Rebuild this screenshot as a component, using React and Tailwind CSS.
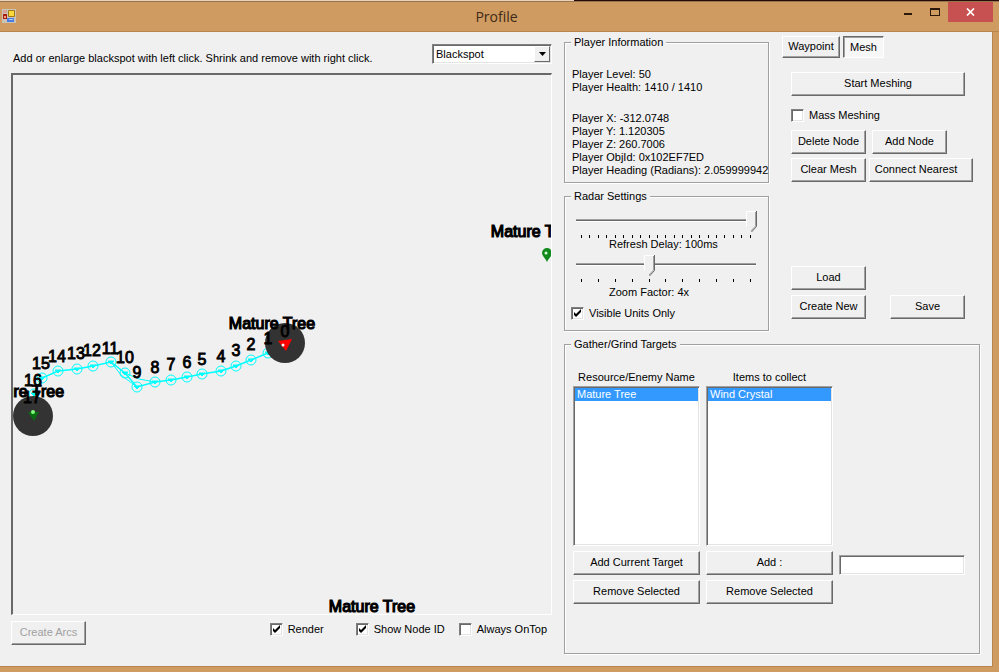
import { useState } from 'react';

const nodes = [
  { id: 1, x: 255, y: 278, labelY: 269 },
  { id: 2, x: 238, y: 285, labelY: 275 },
  { id: 3, x: 223, y: 291, labelY: 281 },
  { id: 4, x: 208, y: 296, labelY: 287 },
  { id: 5, x: 189, y: 299, labelY: 290 },
  { id: 6, x: 174, y: 302, labelY: 293 },
  { id: 7, x: 158, y: 305, labelY: 295 },
  { id: 8, x: 142, y: 307, labelY: 298 },
  { id: 9, x: 124, y: 312, labelY: 303 },
  { id: 10, x: 112, y: 298, labelY: 288 },
  { id: 11, x: 98, y: 287, labelY: 279 },
  { id: 12, x: 80, y: 291, labelY: 281 },
  { id: 13, x: 64, y: 294, labelY: 284 },
  { id: 14, x: 45, y: 296, labelY: 287 },
  { id: 15, x: 29, y: 303, labelY: 294 },
  { id: 16, x: 21, y: 319, labelY: 311 },
  { id: 17, x: 20, y: 338, labelY: 328 },
];

const targets = [
  { x: 259, y: 254 },
  { x: 8, y: 322 },
  { x: 521, y: 162 },
  { x: 359, y: 537 },
];

function Button({ className = '', children, ...props }) {
  return (
    <button
      type="button"
      className={`h-6 border border-t-white border-l-white border-r-[#696969] border-b-[#696969] bg-[#f0f0f0] pb-px text-center whitespace-nowrap shadow-[inset_-1px_-1px_0_#a0a0a0] disabled:text-[#a0a0a0] ${className}`}
      {...props}
    >
      {children}
    </button>
  );
}

function Group({ title, className = '', children }) {
  return (
    <fieldset className={`min-w-0 border border-[#a0a0a0] shadow-[1px_1px_0_#fff,inset_1px_1px_0_#fff] ${className}`}>
      <legend className="ml-[6px] bg-[#f0f0f0] px-[3px]">{title}</legend>
      {children}
    </fieldset>
  );
}

function CheckBox({ label, defaultChecked = false }) {
  return (
    <label className="flex items-center gap-[5px] whitespace-nowrap">
      <span className="relative block h-[13px] w-[13px]">
        <input
          type="checkbox"
          defaultChecked={defaultChecked}
          className="peer block h-[13px] w-[13px] appearance-none border border-t-[#808080] border-l-[#808080] border-r-white border-b-white bg-white shadow-[inset_1px_1px_0_#696969,inset_-1px_-1px_0_#e3e3e3]"
        />
        <svg viewBox="0 0 13 13" className="pointer-events-none absolute inset-0 hidden peer-checked:block">
          <path d="M3 5v3l2 2 5-5V2L5 7z" fill="#000" />
        </svg>
      </span>
      {label}
    </label>
  );
}

function Slider({ label, value, max, onChange }) {
  return (
    <div className="relative ml-[11px] h-[27px] w-[180px]">
      <div className="pt-[8px]">
        <div className="h-[3px] border-t border-b border-t-[#a0a0a0] border-b-white bg-[#696969]" />
      </div>
      <div className="mt-[13px] flex justify-between px-[5px]">
        {Array.from({ length: max + 1 }, (_, i) => (
          <span key={i} className="h-[3px] w-px bg-black" />
        ))}
      </div>
      <div className="pointer-events-none absolute inset-x-[5px] top-0">
        <svg
          width="11"
          height="21"
          viewBox="0 0 11 21"
          className="-ml-[5px]"
          style={{ position: 'relative', left: `${(value / max) * 100}%` }}
        >
          <path d="M0 0h11v15l-5.500 6L0 15z" fill="#f0f0f0" />
          <path d="M.5 15.500V.5H10" fill="none" stroke="#fff" />
          <path d="M9.500 1v14L5 20" fill="none" stroke="#a0a0a0" />
          <path d="M10.500 0v15.500L5.500 21" fill="none" stroke="#696969" />
        </svg>
      </div>
      <input
        type="range"
        aria-label={label}
        min="0"
        max={max}
        value={value}
        onChange={(e) => onChange(Number(e.target.value))}
        className="absolute inset-0 h-full w-full opacity-0"
      />
    </div>
  );
}

function ListBox({ id, label, items }) {
  return (
    <div className="flex flex-col">
      <label htmlFor={id} className="mb-[2px] text-center">{label}</label>
      <select
        id={id}
        size={12}
        defaultValue={items[0]}
        className="h-[160px] w-full appearance-none overflow-hidden border border-t-[#a0a0a0] border-l-[#a0a0a0] border-r-white border-b-white bg-white p-px shadow-[inset_1px_1px_0_#696969,inset_-1px_-1px_0_#e3e3e3] outline-none"
      >
        {items.map((item) => (
          <option
            key={item}
            className="h-[13px] min-h-0 p-0 pl-[2px] leading-[13px] checked:bg-[linear-gradient(#3399ff,#3399ff)] checked:text-white"
          >
            {item}
          </option>
        ))}
      </select>
    </div>
  );
}

function Pin({ x, y }) {
  return (
    <g transform={`translate(${x} ${y})`}>
      <path d="M0 7C-1 4-5 1-5-2a5 5 0 0 1 10 0C5 1 1 4 0 7z" fill="#128a1c" />
      <circle cx="-1" cy="-2" r="1.500" fill="#d9ffd9" />
    </g>
  );
}

function RadarMap() {
  return (
    <svg className="block min-h-[500px] w-full" fontFamily="'Liberation Sans', Arial, sans-serif" fontSize="16">
      <g fill="none" stroke="#00ffff" strokeWidth="1.500">
        <polyline points={`272,270 ${nodes.map((n) => `${n.x},${n.y}`).join(' ')}`} />
        <path d="M142 307l-16-3-14-6M98 287l10 13 16 12" strokeWidth="1" />
      </g>
      {nodes.map((n) => (
        <g key={n.id} stroke="#00ffff" fill="none">
          <circle cx={n.x} cy={n.y} r="5" />
          <path d={`M${n.x - 3} ${n.y - 1}l6 0-3 3z`} fill="#00ffff" />
        </g>
      ))}

      <circle cx="272" cy="268" r="20" fill="#333" />
      <circle cx="20" cy="341" r="20" fill="#333" />

      {/* player marker */}
      <path d="M265 266l14-2-6 12z" fill="#f00" />
      <circle cx="270" cy="270" r="1.500" fill="#fff" />
      <path d="M15 337h11l-5 9z" fill="#0a6b12" />
      <circle cx="20" cy="337" r="2" fill="#7dff7d" />
      <Pin x={534} y={180} />

      <g textAnchor="middle" stroke="#000" strokeWidth="0.900">
        <text x="272" y="262">0</text>
        {nodes.map((n) => (
          <text key={n.id} x={n.x - (n.id > 10 ? 1 : 0)} y={n.labelY}>{n.id}</text>
        ))}
      </g>
      <g textAnchor="middle" stroke="#000" strokeWidth="1.200">
        {targets.map((t) => (
          <text key={t.x} x={t.x} y={t.y}>Mature Tree</text>
        ))}
      </g>
    </svg>
  );
}

function TitleBar() {
  return (
    <header className="grid h-[31px] grid-cols-[1fr_auto_1fr] border-t border-b border-t-[#96744f] border-b-[#b8854f] bg-[#cf9b60] pr-[6px]">
      <svg width="14" height="14" viewBox="0 0 14 14" className="mt-[7px] ml-[2px]">
        <path d="M0 0h14v14H0z" fill="#c9c3b8" />
        <path d="M1 1h4v3H1z" fill="#d6a296" />
        <path d="M1 5h4v5H1z" fill="#a81e14" />
        <path d="M2 7h2v2H2z" fill="#f0a080" />
        <path d="M6.500 1.500h6v6h-6z" fill="#fbd83c" stroke="#a07818" />
        <path d="M5 9h7v4H5z" fill="#4c7de0" />
        <path d="M7 10h4v1H7z" fill="#a9c8ff" />
      </svg>
      <h1 className="font-['Open_Sans',sans-serif] text-[14px] leading-[29px] text-[#3d2a18]">Profile</h1>
      <div className="flex h-5 justify-end">
        <button type="button" aria-label="Minimize" className="flex w-[27px] justify-center">
          <svg width="9" height="20" viewBox="0 0 9 20">
            <path d="M1 11h8v2H1z" fill="#2b1a0c" />
          </svg>
        </button>
        <button type="button" aria-label="Maximize" className="flex w-[27px] justify-center">
          <svg width="10" height="20" viewBox="0 0 10 20">
            <path d="M0 6h10v8H0z M1 8v5h8V8z" fill="#2b1a0c" fillRule="evenodd" />
          </svg>
        </button>
        <button type="button" aria-label="Close" className="flex w-[45px] items-center justify-center bg-[#c75050]">
          <svg width="9" height="8" viewBox="0 0 9 8">
            <path d="M1 .5l7 7M8 .5l-7 7" stroke="#fff" strokeWidth="1.700" />
          </svg>
        </button>
      </div>
    </header>
  );
}

function App() {
  const [delay, setDelay] = useState(20);
  const [zoom, setZoom] = useState(4);

  return (
    <div className="flex min-h-screen flex-col bg-[#cf9b60] font-['Liberation_Sans',Arial,sans-serif] text-[11px] leading-[13px] text-black">
      <div className="h-px bg-[linear-gradient(90deg,#ecd2b8_574px,#2a0a08_574px)]" />
      <TitleBar />

      <main className="mr-[6px] mb-[6px] flex flex-1 border-r border-b border-[#b8854f] bg-[#f0f0f0]">
        {/* Map side */}
        <section className="flex min-w-0 flex-1 flex-col pt-3 pl-[11px]">
          <div className="mb-[9px] flex h-5 items-end justify-between">
            <label htmlFor="mode" className="pl-[2px] leading-[11px] whitespace-nowrap">
              Add or enlarge blackspot with left click. Shrink and remove with right click.
            </label>
            <div className="relative h-5 w-[120px]">
              <select
                id="mode"
                className="h-full w-full appearance-none border border-t-[#808080] border-l-[#808080] border-r-white border-b-white bg-white pl-[3px] shadow-[inset_1px_1px_0_#696969,inset_-1px_-1px_0_#e3e3e3]"
              >
                <option>Blackspot</option>
              </select>
              <span className="pointer-events-none absolute top-[2px] right-[2px] flex h-4 w-4 items-center justify-center border border-t-white border-l-white border-r-[#696969] border-b-[#696969] bg-[#f0f0f0]">
                <svg width="7" height="4" viewBox="0 0 7 4">
                  <path d="M0 0h7L3.500 4z" fill="#000" />
                </svg>
              </span>
            </div>
          </div>

          <div className="flex flex-1 overflow-hidden border-t-2 border-r border-b border-l-2 border-t-[#696969] border-r-white border-b-white border-l-[#696969]">
            <RadarMap />
          </div>

          <div className="flex items-start pt-[6px] pb-[21px]">
            <Button disabled className="w-[75px]">Create Arcs</Button>
            <div className="ml-auto flex gap-[14px] pt-[2px] pr-[5px]">
              <div className="mr-[18px]">
                <CheckBox label="Render" defaultChecked />
              </div>
              <CheckBox label="Show Node ID" defaultChecked />
              <CheckBox label="Always OnTop" />
            </div>
          </div>
        </section>

        {/* Settings side */}
        <section className="mr-3 ml-3 flex w-[416px] shrink-0 flex-col gap-[7px] pt-1 pb-3">
          <div className="flex gap-[13px]">
            <div className="flex w-[205px] flex-col gap-[7px]">
              <Group title="Player Information" className="h-[147px]">
                <div className="pt-[19px] pl-[7px] whitespace-nowrap">
                  <p>Player Level: 50</p>
                  <p>Player Health: 1410 / 1410</p>
                  <p className="mt-[18px]">Player X: -312.0748</p>
                  <p>Player Y: 1.120305</p>
                  <p>Player Z: 260.7006</p>
                  <p>Player ObjId: 0x102EF7ED</p>
                  <p>Player Heading (Radians): 2.059999942</p>
                </div>
              </Group>

              <Group title="Radar Settings" className="h-[141px] pt-[8px]">
                <Slider label="Refresh Delay" value={delay} max={20} onChange={setDelay} />
                <p className="mb-1 pl-11">Refresh Delay: {delay * 5}ms</p>
                <Slider label="Zoom Factor" value={zoom} max={10} onChange={setZoom} />
                <p className="mt-1 mb-2 pl-11">Zoom Factor: {zoom}x</p>
                <div className="pl-[6px]">
                  <CheckBox label="Visible Units Only" defaultChecked />
                </div>
              </Group>
            </div>

            <div className="flex flex-1 flex-col">
              <div className="flex h-[22px] gap-[3px]">
                <button
                  type="button"
                  className="w-[58px] border border-t-white border-l-white border-r-[#696969] border-b-[#696969] pb-[2px] shadow-[inset_-1px_-1px_0_#a0a0a0]"
                >
                  Waypoint
                </button>
                <button
                  type="button"
                  aria-pressed="true"
                  className="w-[41px] border border-t-[#696969] border-l-[#696969] border-r-white border-b-white bg-[#f7f7f7] shadow-[inset_1px_1px_0_#a0a0a0]"
                >
                  Mesh
                </button>
              </div>

              <div className="flex flex-col pt-[14px] pl-[9px]">
                <Button className="w-[174px]">Start Meshing</Button>
                <div className="mt-[13px] mb-2">
                  <CheckBox label="Mass Meshing" />
                </div>
                <div className="mb-1 flex gap-[6px]">
                  <Button className="w-[75px]">Delete Node</Button>
                  <Button className="w-[75px]">Add Node</Button>
                </div>
                <div className="mb-[84px] flex gap-[3px]">
                  <Button className="w-[75px]">Clear Mesh</Button>
                  <Button className="w-[104px] pr-[10px]">Connect Nearest</Button>
                </div>
                <Button className="mb-[5px] w-[75px]">Load</Button>
                <div className="flex gap-6">
                  <Button className="w-[75px]">Create New</Button>
                  <Button className="w-[75px]">Save</Button>
                </div>
              </div>
            </div>
          </div>

          <Group title="Gather/Grind Targets" className="flex-1 pb-[49px]">
            <div className="grid grid-cols-[127px_127px_126px] items-end gap-x-[6px] gap-y-[5px] pt-5 pl-2">
              <ListBox id="targets" label="Resource/Enemy Name" items={['Mature Tree']} />
              <ListBox id="items" label="Items to collect" items={['Wind Crystal']} />
              <span />
              <Button>Add Current Target</Button>
              <Button>Add :</Button>
              <input
                type="text"
                aria-label="Item to add"
                className="h-5 w-full border border-t-[#a0a0a0] border-l-[#a0a0a0] border-r-white border-b-white bg-white px-1 shadow-[inset_1px_1px_0_#696969,inset_-1px_-1px_0_#e3e3e3]"
              />
              <Button>Remove Selected</Button>
              <Button>Remove Selected</Button>
            </div>
          </Group>
        </section>
      </main>
    </div>
  );
}

export default App;
